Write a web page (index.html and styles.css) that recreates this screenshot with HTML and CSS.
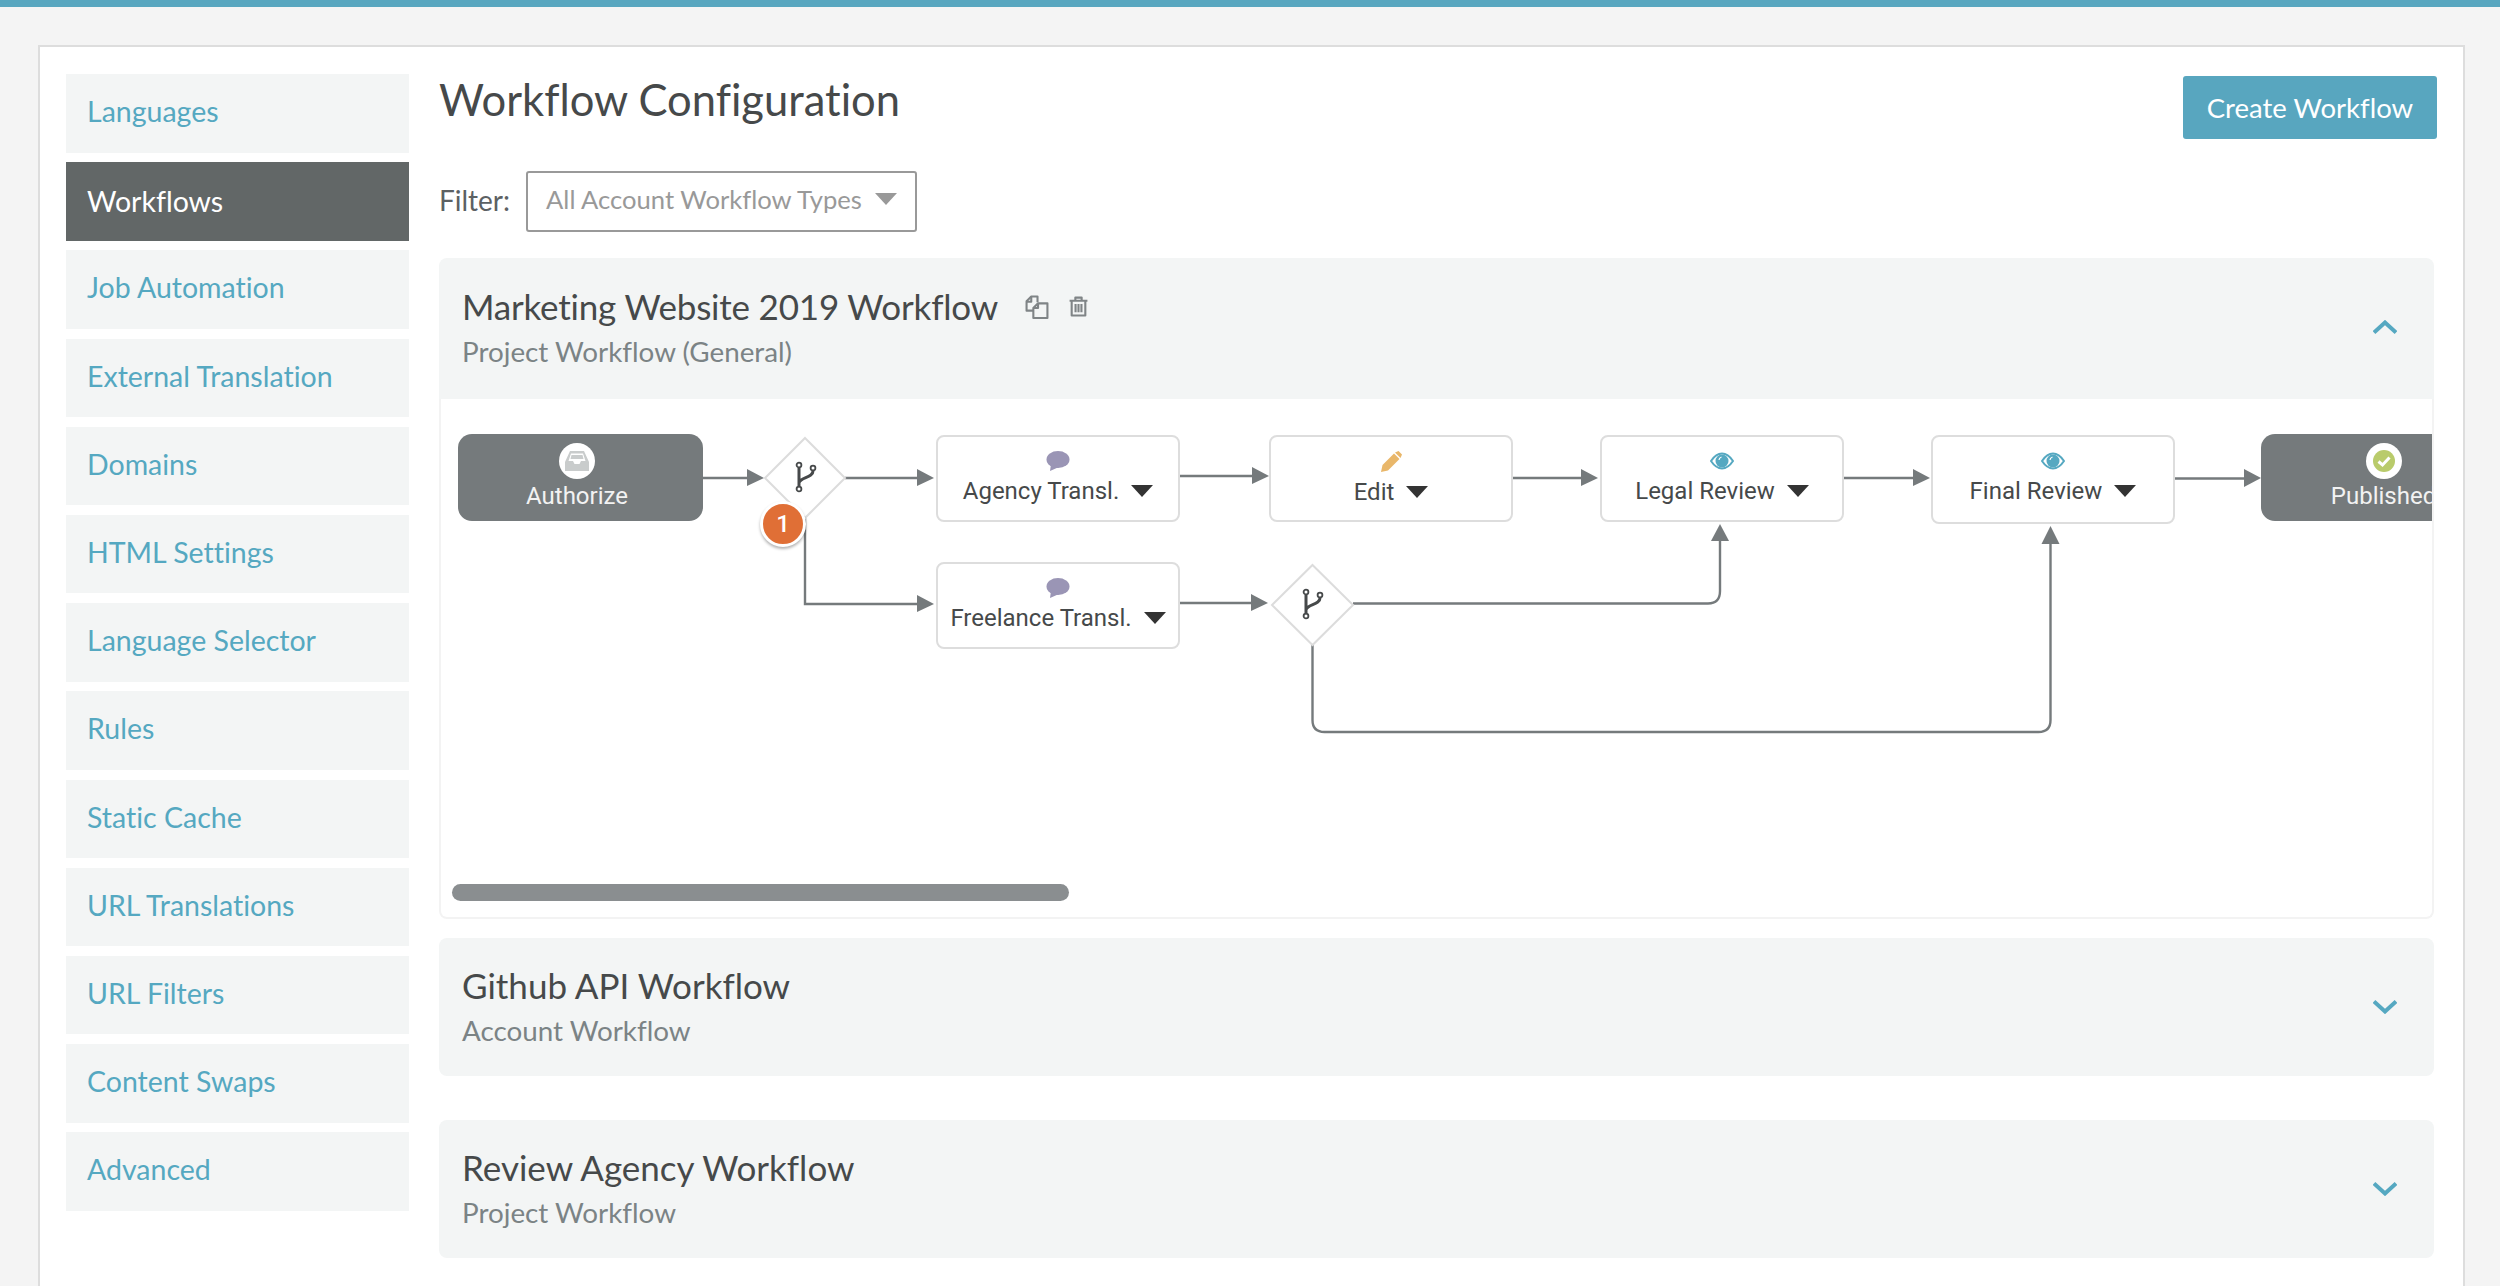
FILE: index.html
```html
<!DOCTYPE html>
<html lang="en">
<head>
<title>Workflow Configuration</title>
<meta charset="utf-8">
<link rel="stylesheet" href="styles.css">
</head>
<body>

<div class="topbar"></div>

<div class="panel">
	<ul class="sidenav">
		<li><a href="#">Languages</a></li>
		<li class="active"><a href="#">Workflows</a></li>
		<li><a href="#">Job Automation</a></li>
		<li><a href="#">External Translation</a></li>
		<li><a href="#">Domains</a></li>
		<li><a href="#">HTML Settings</a></li>
		<li><a href="#">Language Selector</a></li>
		<li><a href="#">Rules</a></li>
		<li><a href="#">Static Cache</a></li>
		<li><a href="#">URL Translations</a></li>
		<li><a href="#">URL Filters</a></li>
		<li><a href="#">Content Swaps</a></li>
		<li><a href="#">Advanced</a></li>
	</ul>

	<div class="content">
		<div class="title-row">
			<h1>Workflow Configuration</h1>
			<a class="btn" href="#">Create Workflow</a>
		</div>

		<div class="filter-row">
			<label>Filter:</label>
			<div class="select">
				<span>All Account Workflow Types</span>
				<i class="caret caret-grey"></i>
			</div>
		</div>

		<div class="workflow">
			<div class="wf-head wf-head-open">
				<div>
					<div class="wf-name wf-name-tight">
						<h2>Marketing Website 2019 Workflow</h2>
						<svg class="ico-copy" viewBox="0 0 23 23" fill="none" stroke="#7f8486" stroke-width="2" stroke-linejoin="round">
							<path d="M8 15H1.500V6L6 1.500h6V7"/>
							<path d="M1.500 6.500H6V1.500"/>
							<path d="M8 12.500L12.500 8h9v14H8z" fill="#f3f5f5"/>
							<path d="M8 12.500h4.500V8"/>
						</svg>
						<svg class="ico-trash" viewBox="0 0 18 20" fill="none" stroke="#7f8486" stroke-width="2" stroke-linejoin="round">
							<path d="M.5 4.500h17M6 4.500V1.500h6v3M2.500 4.500v14h13v-14"/>
							<path d="M6.200 7.500v8M9 7.500v8M11.800 7.500v8"/>
						</svg>
					</div>
					<div class="wf-type">Project Workflow (General)</div>
				</div>
				<svg class="chevron" viewBox="0 0 24 14" fill="none" stroke="#55a8c1" stroke-width="4"><path d="M1 12.500L12 2.500l11 10"/></svg>
			</div>

			<div class="wf-body">
				<div class="canvas">
					<svg class="wires" width="1992" height="480" viewBox="0 0 1992 480">
						<g fill="none" stroke="#757a7c" stroke-width="2.400">
							<path d="M262 79H308"/>
							<path d="M404 79H477"/>
							<path d="M364 119V205H477"/>
							<path d="M739 77H812"/>
							<path d="M1072 79H1141"/>
							<path d="M1403 79H1473"/>
							<path d="M1734 79.500H1804"/>
							<path d="M739 204H811"/>
							<path d="M912 204.500H1267Q1279 204.500 1279 192V141"/>
							<path d="M871.500 246V321Q871.500 333 883.500 333H1597.500Q1609.500 333 1609.500 321V144"/>
						</g>
						<g fill="#757a7c">
							<path d="M306 70L323 79L306 87z"/>
							<path d="M476 70L493 79L476 87z"/>
							<path d="M476 196L493 205L476 213z"/>
							<path d="M811 68L828 77L811 85z"/>
							<path d="M1140 70L1157 79L1140 87z"/>
							<path d="M1472 70L1489 79L1472 87z"/>
							<path d="M1803 70L1820 79L1803 88z"/>
							<path d="M810 195L827 204L810 212z"/>
							<path d="M1270 142L1279 125L1288 142z"/>
							<path d="M1600.500 145L1609.500 127L1618.500 145z"/>
						</g>
						<g fill="#fff" stroke="#dcdcdc" stroke-width="2">
							<path d="M364 39L404 79L364 119L324 79z"/>
							<path d="M871.500 166L912 206L871.500 246L831 206z"/>
						</g>
						<g fill="none" stroke="#46494a">
							<g transform="translate(355 63)">
								<circle cx="3" cy="3" r="2.400" stroke-width="1.800"/>
								<circle cx="3" cy="27" r="2.400" stroke-width="1.800"/>
								<circle cx="17" cy="6" r="2.400" stroke-width="1.800"/>
								<path d="M3 6V24M3 21C4 15 17 16 17 9" stroke-width="3"/>
							</g>
							<g transform="translate(862 190)">
								<circle cx="3" cy="3" r="2.400" stroke-width="1.800"/>
								<circle cx="3" cy="27" r="2.400" stroke-width="1.800"/>
								<circle cx="17" cy="6" r="2.400" stroke-width="1.800"/>
								<path d="M3 6V24M3 21C4 15 17 16 17 9" stroke-width="3"/>
							</g>
						</g>
					</svg>

					<div class="node node-dark node-authorize">
						<span class="disc">
							<svg width="26" height="22" viewBox="0 0 26 22" fill="#c9cccc"><path d="M6 1h14l5 11v9H1v-9zM7 3.500L4.500 11H9l1.500 3h5L17 11h4.500L19 3.500z"/><path d="M7.500 5h11l1 4H6.500z"/></svg>
						</span>
						<span>Authorize</span>
					</div>

					<span class="badge">1</span>

					<div class="node node-agency">
						<svg class="ico" width="24" height="20" viewBox="0 0 24 20" fill="#9a95b5"><ellipse cx="12" cy="8.500" rx="11.500" ry="8.500"/><path d="M5 13L4 20L13 16z"/></svg>
						<div class="node-label"><span>Agency Transl.</span><i class="caret"></i></div>
					</div>
					<div class="node node-freelance">
						<svg class="ico" width="24" height="20" viewBox="0 0 24 20" fill="#9a95b5"><ellipse cx="12" cy="8.500" rx="11.500" ry="8.500"/><path d="M5 13L4 20L13 16z"/></svg>
						<div class="node-label"><span>Freelance Transl.</span><i class="caret"></i></div>
					</div>
					<div class="node node-edit">
						<svg class="ico" width="22" height="21" viewBox="0 0 22 21" fill="#e9b76a"><path d="M15 1.500L18.500 0L22 3.500L20.500 7z"/><path d="M14 2.500L19.500 8L8 19.500L1 21L2.500 14z"/></svg>
						<div class="node-label"><span>Edit</span><i class="caret"></i></div>
					</div>
					<div class="node node-legal">
						<svg class="ico" width="24" height="20" viewBox="0 0 24 20"><path d="M1 10C5 4 8.500 2.500 12 2.500S19 4 23 10C19 16 15.500 17.500 12 17.500S5 16 1 10z" fill="none" stroke="#55a8c1" stroke-width="2"/><circle cx="12" cy="10" r="6.500" fill="#55a8c1"/><path d="M9 9C9 7.500 10 6.500 11.500 6" stroke="#fff" fill="none" stroke-width="1.200"/></svg>
						<div class="node-label"><span>Legal Review</span><i class="caret"></i></div>
					</div>
					<div class="node node-final">
						<svg class="ico" width="24" height="20" viewBox="0 0 24 20"><path d="M1 10C5 4 8.500 2.500 12 2.500S19 4 23 10C19 16 15.500 17.500 12 17.500S5 16 1 10z" fill="none" stroke="#55a8c1" stroke-width="2"/><circle cx="12" cy="10" r="6.500" fill="#55a8c1"/><path d="M9 9C9 7.500 10 6.500 11.500 6" stroke="#fff" fill="none" stroke-width="1.200"/></svg>
						<div class="node-label"><span>Final Review</span><i class="caret"></i></div>
					</div>

					<div class="node node-dark node-published">
						<span class="disc">
							<svg width="24" height="24" viewBox="0 0 24 24"><circle cx="12" cy="12" r="11" fill="#b9cb6b"/><path d="M6.500 12.500L10.500 16L17.500 8.500" fill="none" stroke="#fff" stroke-width="3"/></svg>
						</span>
						<span>Published</span>
					</div>
				</div>
				<div class="scrollbar"><div class="scroll-thumb"></div></div>
			</div>
		</div>

		<div class="workflow">
			<div class="wf-head">
				<div>
					<div class="wf-name"><h2>Github API Workflow</h2></div>
					<div class="wf-type">Account Workflow</div>
				</div>
				<svg class="chevron chevron-down" viewBox="0 0 24 14" fill="none" stroke="#55a8c1" stroke-width="4"><path d="M1 1.500L12 11.500L23 1.500"/></svg>
			</div>
		</div>

		<div class="workflow workflow-last">
			<div class="wf-head">
				<div>
					<div class="wf-name"><h2>Review Agency Workflow</h2></div>
					<div class="wf-type">Project Workflow</div>
				</div>
				<svg class="chevron chevron-down" viewBox="0 0 24 14" fill="none" stroke="#55a8c1" stroke-width="4"><path d="M1 1.500L12 11.500L23 1.500"/></svg>
			</div>
		</div>
	</div>
</div>

</body>
</html>
```

FILE: styles.css
```css
* {
	box-sizing: border-box;
}

html, body {
	height: 1286px;
	margin: 0;
	overflow: hidden;
}

body {
	background-color: #f4f4f4;
	color: #46494a;
	font-family: Lato, "Liberation Sans", sans-serif;
	font-variant-ligatures: none;
}

a {
	text-decoration: none;
}

.topbar {
	height: 7px;
	background-color: #58a6bf;
}

.panel {
	display: flex;
	gap: 30px;
	width: 2427px;
	height: 1279px;
	margin: 38px 0 0 38px;
	padding: 27px 26px 0 26px;
	background-color: #fff;
	border: 2px solid #ddd;
	border-bottom: 0;
}

/* side menu */

.sidenav {
	flex: none;
	width: 343px;
	margin: 0;
	padding: 0;
	list-style-type: none;
}

.sidenav li {
	height: 78.500px;
	margin-bottom: 9.700px;
	background-color: #f3f5f5;
}

.sidenav a {
	display: block;
	padding: 0 21px;
	color: #55a8c1;
	font-size: 28.500px;
	line-height: 75px;
}

.sidenav .active {
	background-color: #626767;
}

.sidenav .active a {
	color: #fff;
	line-height: 79px;
}

/* main column */

.content {
	flex: 1;
	min-width: 0;
}

.title-row {
	display: flex;
	justify-content: space-between;
	align-items: flex-start;
	height: 97px;
}

h1 {
	margin: 0;
	font-size: 43.500px;
	font-weight: 400;
	line-height: 50px;
}

.btn {
	width: 254px;
	height: 63px;
	margin-top: 2px;
	background-color: #58a6bf;
	border-radius: 3px;
	color: #fff;
	font-size: 27.500px;
	line-height: 63px;
	text-align: center;
}

.filter-row {
	display: flex;
	align-items: center;
	gap: 16px;
	height: 61px;
	margin-bottom: 26px;
	color: #5c6163;
	font-size: 28px;
}

.filter-row label {
	padding-bottom: 4px;
}

.select {
	display: flex;
	align-items: center;
	justify-content: space-between;
	width: 391px;
	height: 61px;
	padding: 0 18px 6px 18px;
	border: 2px solid #999;
	border-radius: 3px;
	color: #999;
	font-size: 25.600px;
}

.caret {
	display: block;
	width: 0;
	height: 0;
	border-left: 11.500px solid transparent;
	border-right: 11.500px solid transparent;
	border-top: 12px solid #333;
}

.caret-grey {
	border-top-color: #999;
}

/* accordion */

.workflow {
	width: 1995px;
	margin-bottom: 19px;
}

.workflow-last {
	margin-top: 44px;
}

.wf-head {
	display: flex;
	align-items: center;
	justify-content: space-between;
	height: 138px;
	padding: 0 37px 3px 23px;
	background-color: #f3f5f5;
	border-radius: 8px;
}

.wf-head-open {
	height: 141px;
	border-radius: 8px 8px 0 0;
}

.wf-name {
	display: flex;
	align-items: center;
}

h2 {
	margin: 0;
	font-size: 35px;
	font-weight: 400;
	line-height: 44px;
}

.wf-name-tight h2 {
	letter-spacing: -0.200px;
	margin-top: -2px;
}

.wf-type {
	margin-top: 7px;
	color: #7b8385;
	font-size: 27.800px;
	line-height: 34px;
}

.ico-copy {
	width: 24px;
	height: 24px;
	margin-left: 27px;
}

.ico-trash {
	width: 19px;
	height: 21px;
	margin-left: 20px;
}

.chevron {
	width: 24px;
	height: 14px;
}

.chevron-down {
	margin-top: 3px;
}

.wf-body {
	height: 520px;
	border: 2px solid #f3f3f3;
	border-top: 0;
	border-radius: 0 0 8px 8px;
}

/* diagram: nodes sit on a free canvas */

.canvas {
	position: relative;
	height: 480px;
	overflow: hidden;
}

.wires {
	position: absolute;
	top: 0;
	left: 0;
}

.node {
	position: absolute;
	top: 36px;
	display: flex;
	flex-direction: column;
	align-items: center;
	width: 244px;
	height: 87px;
	padding-top: 14px;
	background-color: #fff;
	border: 2px solid #ddd;
	border-radius: 8px;
	font-family: Roboto, sans-serif;
	font-size: 24px;
}

.node-label {
	display: flex;
	align-items: center;
	gap: 12px;
	margin-top: 3px;
	line-height: 34px;
}

.node-agency { left: 495px; }
.node-freelance { left: 495px; top: 163px; }
.node-edit { left: 828px; }
.node-legal { left: 1159px; }
.node-final { left: 1490px; height: 89px; }

.node-dark {
	width: 245px;
	padding-top: 9px;
	background-color: #757a7c;
	border: 0;
	border-radius: 14px;
	color: #f2f2f2;
	line-height: 35px;
}

.node-authorize { left: 17px; top: 35px; padding-right: 7px; }
.node-published { left: 1820px; top: 35px; }

.disc {
	display: flex;
	align-items: center;
	justify-content: center;
	flex: none;
	width: 36px;
	height: 36px;
	background-color: #fff;
	border-radius: 50%;
}

.badge {
	position: absolute;
	left: 319px;
	top: 102px;
	width: 46px;
	height: 46px;
	background-color: #e06f36;
	border: 3px solid #fff;
	border-radius: 50%;
	box-shadow: 0 2px 3px rgba(0, 0, 0, 0.3);
	color: #fff;
	font-family: Roboto, sans-serif;
	font-size: 24px;
	font-weight: 500;
	line-height: 40px;
	text-align: center;
}

.scrollbar {
	padding: 5px 0 0 11px;
}

.scroll-thumb {
	width: 617px;
	height: 17px;
	background-color: #8a8e90;
	border-radius: 9px;
}
```
